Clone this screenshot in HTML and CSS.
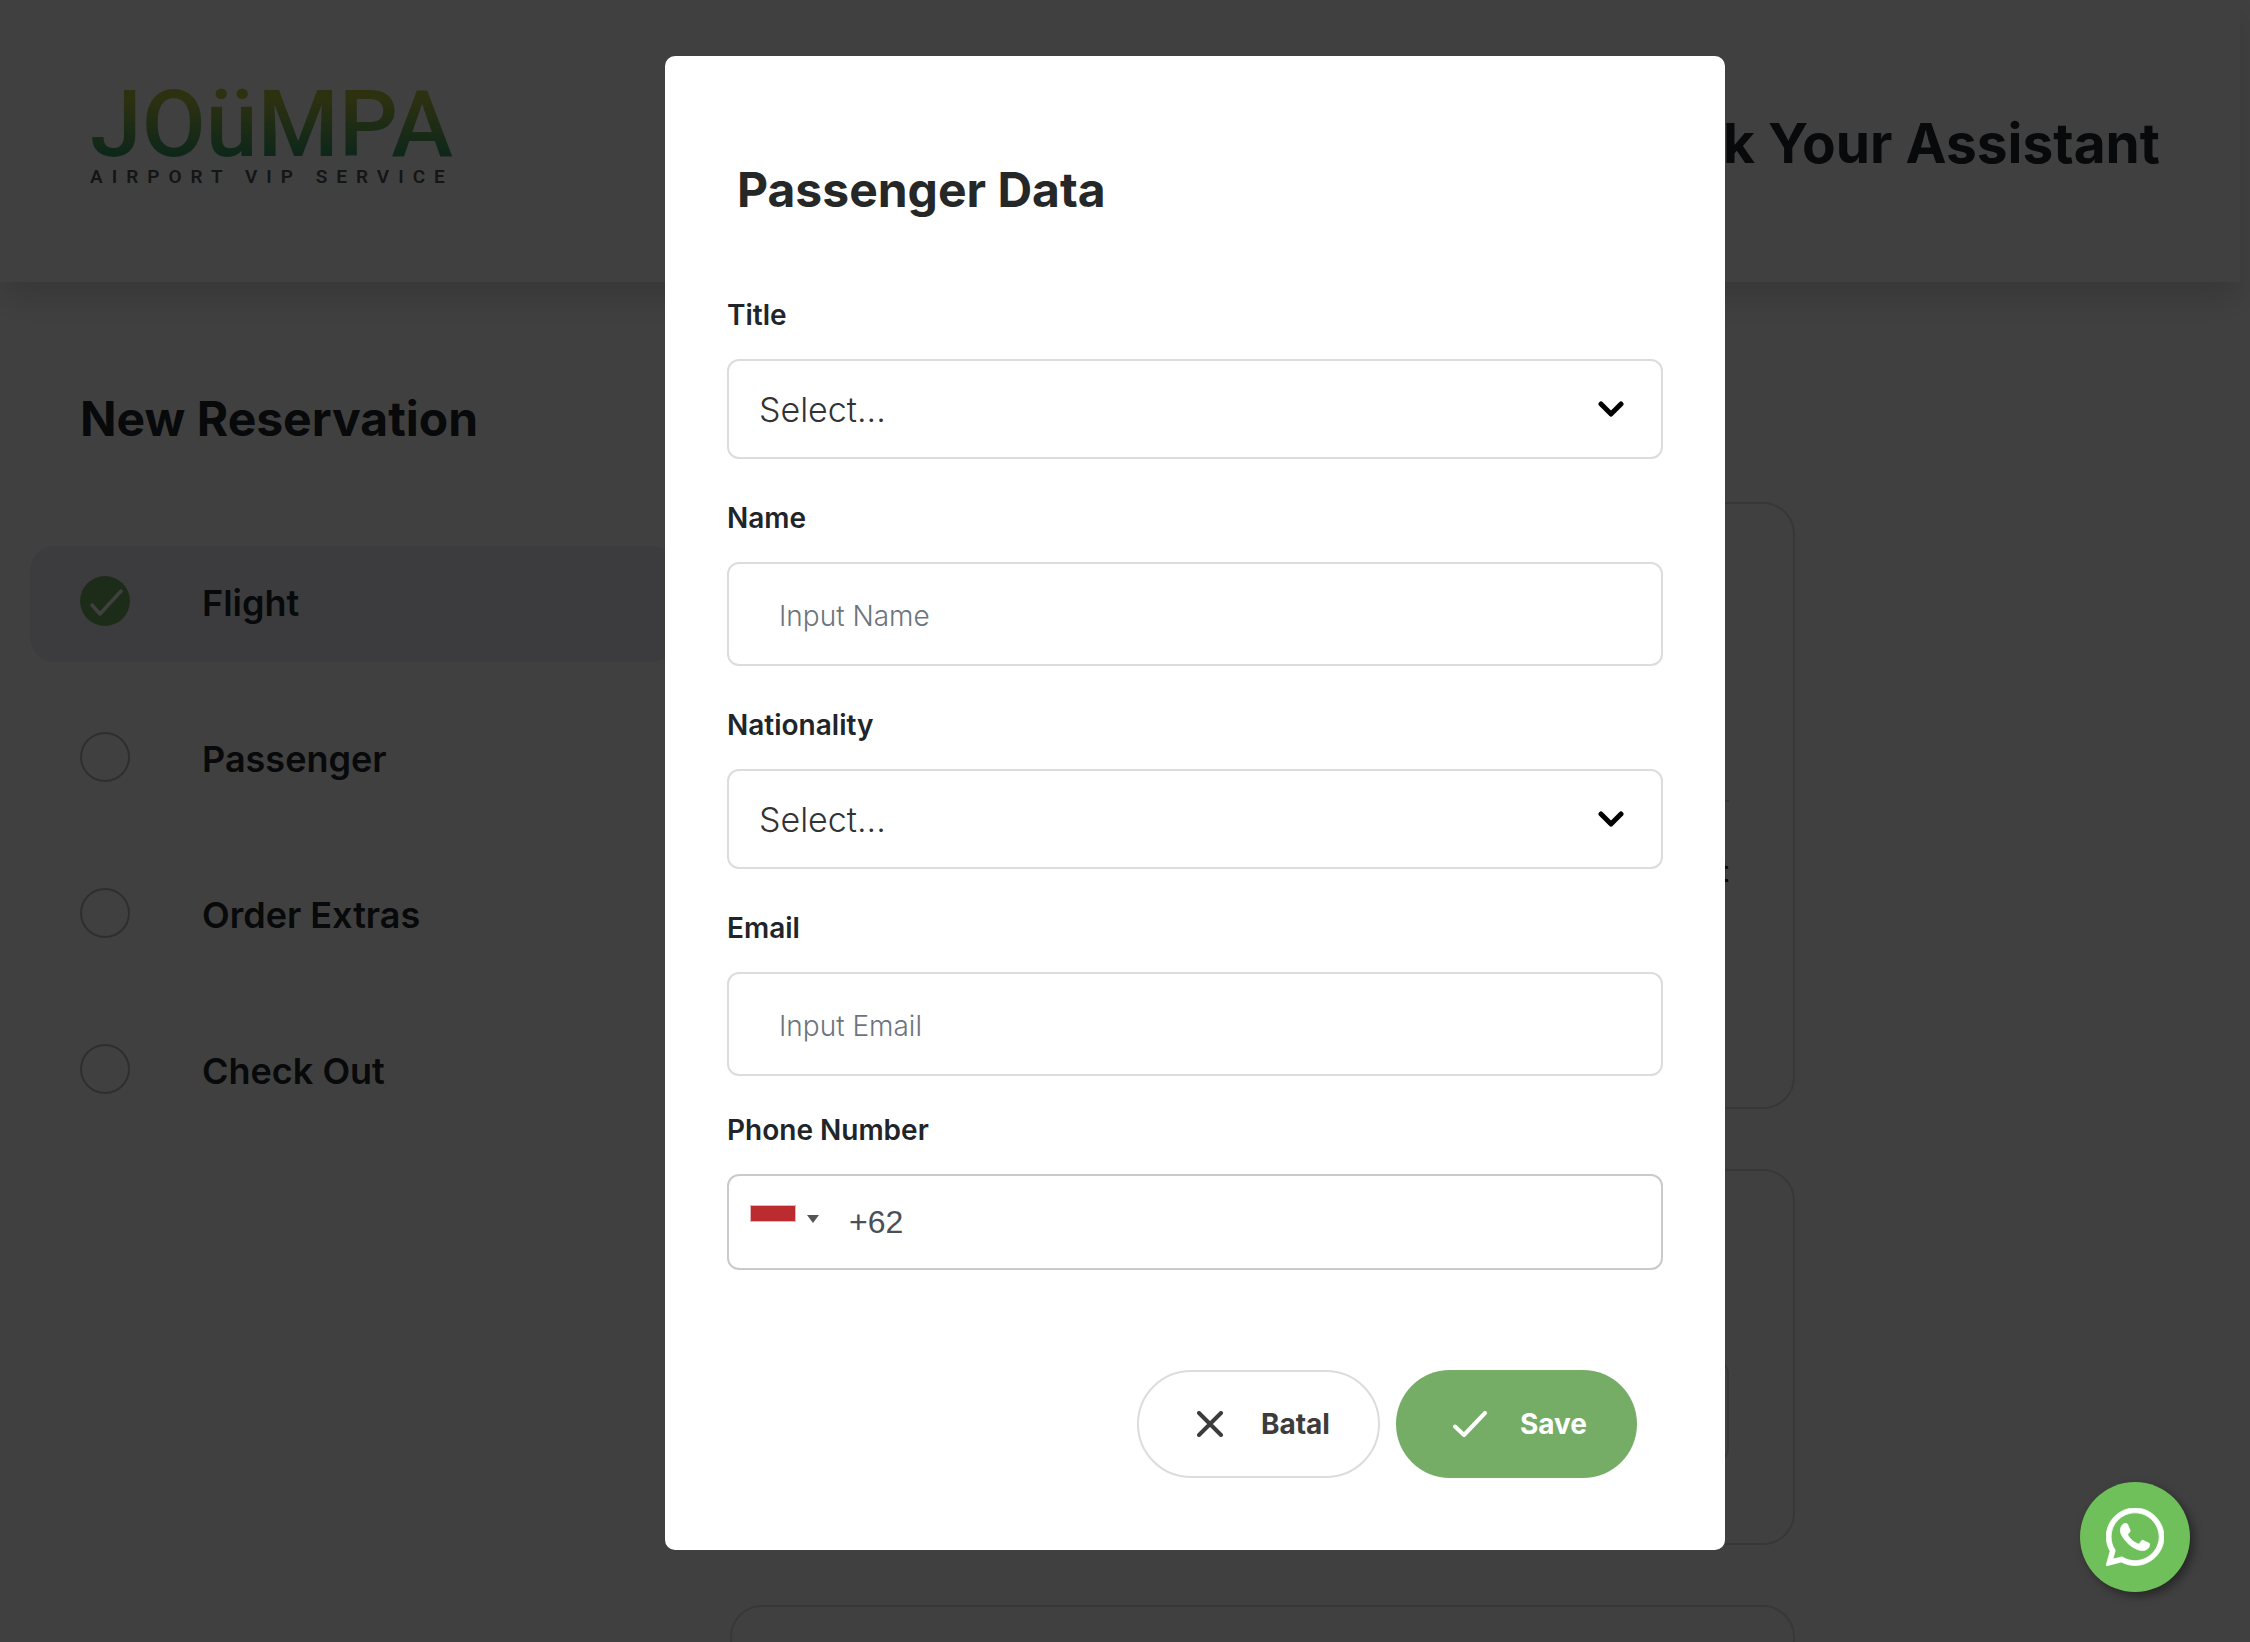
FILE: index.html
```html
<!DOCTYPE html>
<html lang="en">
<head>
<meta charset="utf-8">
<meta name="viewport" content="width=device-width, initial-scale=1">
<title>Joumpa – Book Your Assistant</title>
<link rel="stylesheet" href="styles.css">
</head>
<body>
<div class="page">
  <header class="topbar">
    <a class="logo" href="#" aria-label="Joumpa Airport VIP Service">
      <span class="logo-name">JOüMPA</span>
      <span class="logo-tag">AIRPORT VIP SERVICE</span>
    </a>
    <h1 class="topbar-title">Book Your Assistant</h1>
  </header>

  <div class="layout">
    <aside class="sidebar">
      <h2 class="sidebar-title">New Reservation</h2>
      <ol class="steps">
        <li class="step step-active">
          <svg class="step-mark" viewBox="0 0 50 50" aria-hidden="true"><circle cx="25" cy="25" r="25" fill="#75ac66"/><path d="M12 29l8 9 21-23" fill="none" stroke="#fff" stroke-width="3.5" stroke-linecap="round" stroke-linejoin="round"/></svg>
          <span>Flight</span>
        </li>
        <li class="step">
          <svg class="step-mark" viewBox="0 0 50 50" aria-hidden="true"><circle cx="25" cy="25" r="24" fill="none" stroke="#b8b8c8" stroke-width="2"/></svg>
          <span>Passenger</span>
        </li>
        <li class="step">
          <svg class="step-mark" viewBox="0 0 50 50" aria-hidden="true"><circle cx="25" cy="25" r="24" fill="none" stroke="#b8b8c8" stroke-width="2"/></svg>
          <span>Order Extras</span>
        </li>
        <li class="step">
          <svg class="step-mark" viewBox="0 0 50 50" aria-hidden="true"><circle cx="25" cy="25" r="24" fill="none" stroke="#b8b8c8" stroke-width="2"/></svg>
          <span>Check Out</span>
        </li>
      </ol>
    </aside>
    <main class="cards">
      <section class="card card-flight"><p class="card-route">Airport</p></section>
      <section class="card card-passenger"><div class="card-slot"></div></section>
      <section class="card card-extras"></section>
    </main>
  </div>
</div>

<div class="overlay">
  <form class="modal" role="dialog" aria-modal="true" aria-labelledby="modal-title">
    <h2 class="modal-title" id="modal-title">Passenger Data</h2>

    <div class="field">
      <label for="title">Title</label>
      <div class="select-wrap">
        <select class="control select" id="title"><option>Select...</option><option>Mr</option><option>Mrs</option></select>
        <svg class="chevron" viewBox="0 0 26 16" aria-hidden="true"><path d="M3 3l10 10L23 3" fill="none" stroke="#000" stroke-width="5" stroke-linecap="round" stroke-linejoin="round"/></svg>
      </div>
    </div>

    <div class="field">
      <label for="name">Name</label>
      <input class="control input" id="name" type="text" placeholder="Input Name">
    </div>

    <div class="field">
      <label for="nationality">Nationality</label>
      <div class="select-wrap">
        <select class="control select" id="nationality"><option>Select...</option><option>Indonesia</option></select>
        <svg class="chevron" viewBox="0 0 26 16" aria-hidden="true"><path d="M3 3l10 10L23 3" fill="none" stroke="#000" stroke-width="5" stroke-linecap="round" stroke-linejoin="round"/></svg>
      </div>
    </div>

    <div class="field">
      <label for="email">Email</label>
      <input class="control input" id="email" type="email" placeholder="Input Email">
    </div>

    <div class="field field-phone">
      <label for="phone">Phone Number</label>
      <div class="control phone">
        <button class="country" type="button" aria-label="Indonesia">
          <svg class="flag" viewBox="0 0 46 34" aria-hidden="true"><path d="M0 0h46v34H0z" fill="#fff"/><path d="M0 0h46v17H0z" fill="#e6b4b6"/><path d="M1 1h44v15H1z" fill="#bc2b30"/></svg>
          <svg class="caret" viewBox="0 0 12 8" aria-hidden="true"><path d="M0 0h12L6 8z" fill="#555"/></svg>
        </button>
        <input class="phone-input" id="phone" type="tel" value="+62">
      </div>
    </div>

    <div class="actions">
      <button class="btn btn-cancel" type="button">
        <svg class="btn-x" viewBox="0 0 26 26" aria-hidden="true"><path d="M2 2l22 22M24 2L2 24" fill="none" stroke="currentColor" stroke-width="4" stroke-linecap="round"/></svg>
        Batal
      </button>
      <button class="btn btn-save" type="submit">
        <svg class="btn-check" viewBox="0 0 34 26" aria-hidden="true"><path d="M2 15.5l9 8.500L32 2" fill="none" stroke="currentColor" stroke-width="4" stroke-linecap="round" stroke-linejoin="round"/></svg>
        Save
      </button>
    </div>
  </form>
</div>

<a class="whatsapp" href="#" aria-label="Chat on WhatsApp">
  <svg viewBox="0 0 448 448" aria-hidden="true"><path fill="#fff" stroke="#fff" stroke-width="6" d="M380.900 65.100C339 23.100 283.200 0 223.900 0 101.500 0 1.900 99.600 1.900 222c0 39.100 10.200 77.300 29.600 111L0 448l117.700-30.900c32.400 17.700 68.900 27 106.100 27h.1c122.300 0 224.100-99.600 224.100-222 0-59.300-25.200-115-67.100-157zm-157 341.600c-33.200 0-65.700-8.900-94-25.700l-6.700-4-69.800 18.300L72 327.200l-4.400-7c-18.500-29.400-28.200-63.300-28.200-98.200 0-101.700 82.800-184.500 184.600-184.500 49.300 0 95.600 19.200 130.400 54.100 34.800 34.900 56.200 81.200 56.100 130.500 0 101.800-84.900 184.600-186.600 184.600zm101.200-138.200c-5.500-2.800-32.800-16.200-37.900-18-5.100-1.900-8.800-2.800-12.500 2.800-3.700 5.600-14.300 18-17.600 21.800-3.200 3.700-6.500 4.200-12 1.400-32.600-16.300-54-29.100-75.500-66-5.700-9.800 5.700-9.100 16.300-30.300 1.800-3.700.9-6.900-.5-9.700-1.400-2.800-12.500-30.100-17.100-41.200-4.500-10.800-9.100-9.300-12.500-9.500-3.200-.2-6.900-.2-10.600-.2-3.700 0-9.700 1.400-14.800 6.900-5.100 5.600-19.400 19-19.400 46.300 0 27.300 19.900 53.700 22.600 57.400 2.800 3.700 39.100 59.700 94.800 83.800 35.200 15.200 49 16.500 66.600 13.900 10.700-1.600 32.800-13.400 37.400-26.400 4.600-13 4.600-24.100 3.200-26.400-1.300-2.500-5-3.900-10.500-6.600z"/></svg>
</a>
</body>
</html>
```
FILE: styles.css
```css
* { box-sizing: border-box; }

body {
  margin: 0;
  min-height: 100vh;
  background: #fff;
  color: #212529;
  font-family: Inter, "Open Sans", sans-serif;
}

h1, h2, p, ol { margin: 0; padding: 0; }

button, input, select { font-family: inherit; }

.page {
  height: 100vh;
  overflow: hidden;
}

/* Header */
.topbar {
  display: flex;
  justify-content: space-between;
  align-items: center;
  height: 282px;
  margin-right: 10px;
  padding: 0 80px 0 90px;
  box-shadow: 0 16px 32px rgba(0, 0, 0, 0.15);
}

.logo {
  display: flex;
  flex-direction: column;
  gap: 2px;
  padding-bottom: 10px;
  color: inherit;
  text-decoration: none;
}

.logo-name {
  background: linear-gradient(#b4c440 15%, #3c9c68 85%);
  background-clip: text;
  color: transparent;
  font: 500 93px/80px Roboto, sans-serif;
}

.logo-tag {
  color: #555;
  font: 600 19px/20px Roboto, sans-serif;
  letter-spacing: 9px;
}

.topbar-title {
  padding-top: 4px;
  font-size: 55px;
  font-weight: 700;
  line-height: 72px;
}

/* Page body */
.layout {
  display: grid;
  grid-template-columns: 646px minmax(0, 1065px);
  column-gap: 54px;
  padding: 104px 30px 0;
}

.sidebar-title {
  padding-left: 50px;
  font-size: 48px;
  font-weight: 700;
  line-height: 66px;
}

.steps {
  display: grid;
  gap: 40px;
  margin-top: 94px;
  list-style: none;
}

.step {
  display: flex;
  align-items: center;
  gap: 72px;
  height: 116px;
  padding: 0 0 2px 50px;
  border-radius: 24px;
  font-size: 36px;
  font-weight: 600;
}

.step-active { background: #f0f0f8; }

.step-mark {
  width: 50px;
  height: 50px;
  margin-bottom: 4px;
}

.cards {
  display: grid;
  align-content: start;
  gap: 60px;
  padding-top: 116px;
}

.card {
  border: 2px solid #dcdcdc;
  border-radius: 32px;
}

.card-flight {
  height: 607px;
  padding: 296px 64px 0;
}

.card-route {
  padding-top: 50px;
  border-top: 2px solid #dcdcdc;
  font-size: 28px;
  font-weight: 600;
  line-height: 40px;
  text-align: right;
}

.card-passenger {
  height: 376px;
  padding: 190px 64px 0;
}

.card-slot {
  height: 100px;
  border: 2px solid #dcdcdc;
  border-radius: 12px;
}

.card-extras { height: 376px; }

/* Dialog */
.overlay {
  position: fixed;
  inset: 0;
  display: flex;
  justify-content: center;
  align-items: flex-start;
  padding: 56px 0;
  padding-left: 140px;
  background: rgba(0, 0, 0, 0.75);
}

.modal {
  width: 1060px;
  padding: 104px 62px 72px;
  border-radius: 10px;
  background: #fff;
}

.modal-title {
  margin-bottom: 75px;
  padding-left: 10px;
  color: #262827;
  font-size: 48px;
  font-weight: 700;
  line-height: 60px;
}

.field { margin-bottom: 39px; }

.field:has(+ .field-phone) { margin-bottom: 34px; }

.field label {
  display: block;
  margin-bottom: 24px;
  font-size: 28px;
  font-weight: 600;
  line-height: 40px;
}

.control {
  display: block;
  width: 100%;
  border: 2px solid #dcdcdc;
  border-radius: 12px;
  background: #fff;
}

.select-wrap { display: grid; }

.select-wrap > * { grid-area: 1 / 1; }

.select {
  height: 100px;
  padding: 0 30px;
  appearance: none;
  color: #333;
  font-size: 34px;
  font-weight: 300;
}

.chevron {
  place-self: center end;
  width: 26px;
  height: 16px;
  margin-right: 39px;
  pointer-events: none;
}

.input {
  height: 104px;
  padding: 4px 50px 0;
  font-size: 28px;
  font-weight: 300;
}

.input::placeholder { color: #6c757d; }

.phone {
  display: flex;
  align-items: center;
  height: 96px;
  padding-left: 21px;
  border-color: #cacaca;
}

.country {
  display: flex;
  align-items: center;
  gap: 11px;
  padding: 0;
  border: 0;
  background: none;
}

.flag {
  width: 46px;
  height: 34px;
}

.caret {
  width: 12px;
  height: 8px;
  margin-bottom: 6px;
}

.phone-input {
  flex: 1;
  min-width: 0;
  margin-left: 30px;
  padding: 0;
  border: 0;
  outline: 0;
  background: none;
  color: #495057;
  font: 32px "Liberation Sans", sans-serif;
}

.actions {
  display: flex;
  justify-content: flex-end;
  gap: 16px;
  padding: 61px 26px 0 0;
}

.btn {
  display: flex;
  align-items: center;
  height: 108px;
  border: 0;
  border-radius: 54px;
  font-size: 28px;
  font-weight: 700;
}

.btn-cancel {
  gap: 38px;
  padding: 0 48px 0 58px;
  border: 2px solid #dcdcdc;
  background: #fff;
  color: #3c3c3c;
}

.btn-save {
  gap: 33px;
  padding: 0 50px 0 57px;
  background: #75ac66;
  color: #fff;
}

.btn-x {
  width: 26px;
  height: 26px;
}

.btn-check {
  width: 34px;
  height: 26px;
}

/* Chat shortcut */
.whatsapp {
  position: fixed;
  right: 60px;
  bottom: 50px;
  display: grid;
  place-items: center;
  width: 110px;
  height: 110px;
  border-radius: 50%;
  background: #6fbf5a;
  box-shadow: 4px 4px 10px rgba(0, 0, 0, 0.4);
}

.whatsapp svg {
  width: 58px;
  height: 58px;
}
```
